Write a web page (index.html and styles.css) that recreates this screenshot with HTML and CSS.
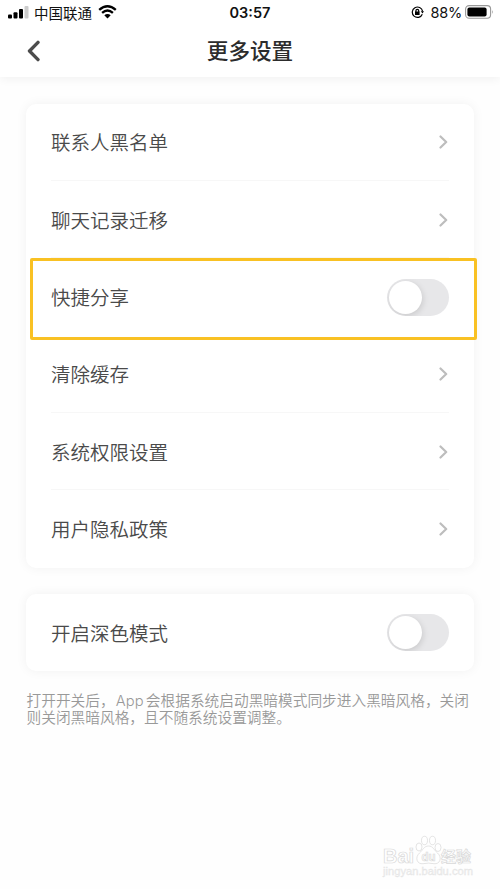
FILE: index.html
```html
<!DOCTYPE html>
<html lang="zh-CN">
<head>
<meta charset="utf-8">
<title>更多设置</title>
<link rel="stylesheet" href="styles.css">
</head>
<body>
<header class="header">
  <div class="status">
    <div class="status-left">
      <svg class="signal" width="21" height="13" viewBox="0 0 21 13"><rect x="0" y="8.5" width="4" height="4" rx="1"/><rect x="5.5" y="6.2" width="4" height="6.3" rx="1"/><rect x="11" y="3" width="4" height="9.5" rx="1"/><rect class="off" x="16.5" y="0" width="4" height="12.5" rx="1"/></svg>
      <span class="carrier">中国联通</span>
      <svg class="wifi" width="19" height="14" viewBox="0 0 19 14"><path d="M1.2 4.8Q9.5-2.2 17.8 4.8M4.1 7.9Q9.5 3.3 14.9 7.9"/><path class="fill" d="M6.3 10.2Q9.5 7.7 12.7 10.2L9.5 13.4Z"/></svg>
    </div>
    <time class="time">03:57</time>
    <div class="status-right">
      <svg class="lock" width="13" height="13" viewBox="0 0 13 13"><path d="M11.3 8.2A5.2 5.2 0 1 1 11.6 5.3M4.9 6V4.8a1.4 1.4 0 0 1 2.8 0V6"/><path class="fill" d="M4 5.6h4.6v3.5H4zM9.8 5.2h3.2l-1.5 2.4z"/></svg>
      <span class="percent">88%</span>
      <svg class="battery" width="29" height="14" viewBox="0 0 29 14"><rect class="case" x=".6" y=".6" width="25" height="12.6" rx="3.5"/><rect x="2.4" y="2.4" width="19.2" height="9" rx="2"/><path class="tip" d="M27.2 5q1.6 2 0 4z"/></svg>
    </div>
  </div>
  <div class="nav">
    <svg class="back" width="14" height="22" viewBox="0 0 14 22"><path d="M11 2.4 2.5 11 11 19.6"/></svg>
    <h1 class="title">更多设置</h1>
  </div>
</header>
<main class="content">
  <section class="card">
    <div class="row"><span>联系人黑名单</span><svg class="chevron" viewBox="0 0 9 14"><path d="M1.5 1.5 7.2 7 1.5 12.5"/></svg></div>
    <div class="row"><span>聊天记录迁移</span><svg class="chevron" viewBox="0 0 9 14"><path d="M1.5 1.5 7.2 7 1.5 12.5"/></svg></div>
    <div class="row plain"><span>快捷分享</span><i class="switch"></i><div class="highlight"></div></div>
    <div class="row"><span>清除缓存</span><svg class="chevron" viewBox="0 0 9 14"><path d="M1.5 1.5 7.2 7 1.5 12.5"/></svg></div>
    <div class="row"><span>系统权限设置</span><svg class="chevron" viewBox="0 0 9 14"><path d="M1.5 1.5 7.2 7 1.5 12.5"/></svg></div>
    <div class="row"><span>用户隐私政策</span><svg class="chevron" viewBox="0 0 9 14"><path d="M1.5 1.5 7.2 7 1.5 12.5"/></svg></div>
  </section>
  <section class="card">
    <div class="row"><span>开启深色模式</span><i class="switch"></i></div>
  </section>
  <p class="note">打开开关后，<span class="latin">App</span>会根据系统启动黑暗模式同步进入黑暗风格，关闭<br>则关闭黑暗风格，且不随系统设置调整。</p>
</main>
<svg class="watermark" width="96" height="48" viewBox="0 0 96 48">
  <text class="brand" x="2" y="30.500" textLength="31" lengthAdjust="spacingAndGlyphs">Bai</text>
  <g class="paw"><ellipse cx="38" cy="15" rx="3" ry="4"/><ellipse cx="43.5" cy="8.5" rx="3" ry="4.2"/><ellipse cx="51.5" cy="8.5" rx="3" ry="4.2"/><ellipse cx="57" cy="15.5" rx="3" ry="4"/><path d="M47.5 14C43 14 42 18 38.5 21 33.500 25.500 36 32.500 42 31.700Q47.500 30.500 53 31.700C59 32.500 61.500 25.500 56.500 21 53 18 52 14 47.500 14Z"/></g>
  <text class="du" x="40.500" y="29" textLength="14" lengthAdjust="spacingAndGlyphs">du</text>
  <text class="brand cn" x="60" y="30" textLength="30">经验</text>
  <text class="url" x="2" y="43" textLength="90" lengthAdjust="spacingAndGlyphs">jingyan.baidu.com</text>
</svg>
</body>
</html>
```
FILE: styles.css
```css
* { box-sizing: border-box; }
body {
  margin: 0;
  height: 889px;
  overflow: hidden;
  position: relative;
  background: #fefefe;
  color: #4a4a4a;
  font-family: "Noto Sans CJK SC", sans-serif;
}
svg { display: block; flex: none; }
.header {
  height: 77px;
  background: #fff;
  box-shadow: 0 2px 9px rgba(0, 0, 0, .055);
}
.status {
  height: 25px;
  display: grid;
  grid-template-columns: 1fr auto 1fr;
  align-items: center;
  padding: 0 6px 0 8px;
  color: #111;
}
.status-left, .status-right { display: flex; align-items: center; }
.status-right { justify-content: flex-end; }
.signal { margin-top: -1px; }
.signal .off { fill: #ccc; }
.carrier { margin-left: 5px; font-size: 14.5px; line-height: 25px; }
.wifi { margin: -1px 0 0 6px; }
.wifi path, .lock path { fill: none; stroke: #000; stroke-width: 2.4; }
.lock path { stroke-width: 1.2; }
.wifi .fill, .lock .fill { fill: #000; stroke: none; }
.time, .percent { font-family: Inter, sans-serif; font-size: 14.5px; line-height: 25px; }
.time { font-weight: 600; margin-left: -2px; }
.percent { margin: 0 3px 0 6px; letter-spacing: -.2px; }
.battery { margin-top: -1px; }
.battery .case { fill: none; stroke: #999; stroke-width: 1.1; }
.battery .tip { fill: #999; }
.nav {
  height: 50px;
  display: grid;
  grid-template-columns: 1fr auto 1fr;
  align-items: center;
  padding: 0 27px;
}
.back { margin-top: 1px; }
.back path { fill: none; stroke: #4c4c4c; stroke-width: 3.4; stroke-linecap: round; stroke-linejoin: round; }
.title { margin: 0; font-size: 21.6px; font-weight: 500; line-height: 50px; color: #2c2c2c; }
.content { padding: 26.5px 26px 0; }
.card {
  background: #fff;
  border-radius: 10px;
  padding: 0 25px;
  margin-bottom: 26px;
  box-shadow: 0 0 12px rgba(0, 0, 0, .055);
}
.row {
  position: relative;
  height: 77.4px;
  display: flex;
  align-items: center;
  justify-content: space-between;
  padding-top: 1.2px;
  border-bottom: 1px solid #f7f7f7;
  font-size: 19.5px;
  font-weight: 350;
  line-height: 28px;
}
.row.plain, .row:last-child { border-bottom-color: transparent; }
.chevron { width: 9px; height: 14px; margin-right: 1px; }
.chevron path { fill: none; stroke: #bdbdbd; stroke-width: 2.2; stroke-linecap: round; stroke-linejoin: round; }
.switch {
  width: 62px;
  height: 37px;
  border-radius: 19px;
  padding: 2px;
  background: #e7e7e9;
  overflow: hidden;
}
.switch::before {
  content: "";
  display: block;
  width: 33px;
  height: 33px;
  border-radius: 50%;
  background: #fff;
  box-shadow: 1px 2px 6px rgba(0, 0, 0, .13);
}
.highlight {
  position: absolute;
  inset: 0 -28px -5px -21px;
  border: 3px solid #f9c123;
  border-radius: 2px;
}
.note {
  margin: -6.5px 0 0;
  padding-left: .5px;
  font-size: 14.7px;
  font-weight: 350;
  line-height: 17px;
  color: #999;
  white-space: nowrap;
}
.note .latin { font-family: Inter, sans-serif; line-height: 0; margin: 0 2px 0 1px; letter-spacing: .2px; }
.watermark { position: absolute; left: 381px; top: 832px; }
.watermark text, .paw { fill: #fff; stroke: #d9d9d9; stroke-width: .7; }
.watermark .brand { font: bold 20px "Liberation Sans", sans-serif; }
.watermark .cn { font: bold 15px "Noto Sans CJK SC", sans-serif; }
.watermark .du { font: bold 12px "Liberation Sans", sans-serif; }
.watermark .url { font: 11px "Liberation Sans", sans-serif; fill: #eee; stroke: #e3e3e3; stroke-width: .3; }
```
